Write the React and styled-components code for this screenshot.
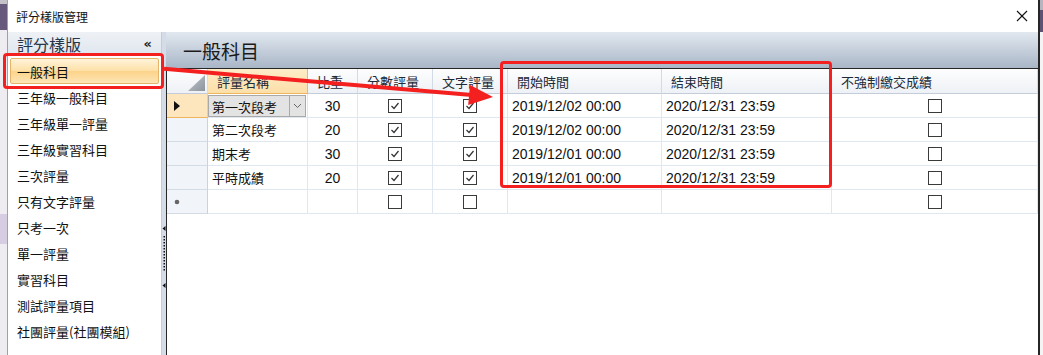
import React from 'react';
import styled, { createGlobalStyle } from 'styled-components';

const GlobalStyle = createGlobalStyle`
  html, body {
    margin: 0;
    padding: 0;
    background: #fff;
    overflow: hidden;
  }
  body {
    font-family: "Liberation Sans", "Noto Sans CJK TC", sans-serif;
    color: #111;
  }
`;

const COLS = '41px 100px 50px 75px 75px 154px 170px 1fr';

const templates = ['一般科目', '三年級一般科目', '三年級單一評量', '三年級實習科目', '三次評量', '只有文字評量', '只考一次', '單一評量', '實習科目', '測試評量項目', '社團評量(社團模組)'];

const rows = [
  { name: '第一次段考', weight: 30, start: '2019/12/02 00:00', end: '2020/12/31 23:59', editing: true },
  { name: '第二次段考', weight: 20, start: '2019/12/02 00:00', end: '2020/12/31 23:59' },
  { name: '期末考', weight: 30, start: '2019/12/01 00:00', end: '2020/12/31 23:59' },
  { name: '平時成績', weight: 20, start: '2019/12/01 00:00', end: '2020/12/31 23:59' },
];

const Screen = styled.div`
  position: relative;
  width: 1043px;
  height: 355px;
  display: flex;
  overflow: hidden;
`;

const DesktopLeft = styled.div`
  width: 7px;
  flex-shrink: 0;
  background: linear-gradient(
    to bottom,
    #c4c2c8 0, #c4c2c8 4px,
    #66597c 4px, #66597c 30px,
    #eeecf1 30px, #eeecf1 214px,
    #d6cde3 214px, #d6cde3 244px,
    #eeecf1 244px
  );
`;

const DesktopRight = styled.div`
  width: 3px;
  flex-shrink: 0;
  background: linear-gradient(to bottom, #b8b4bf 0, #b8b4bf 10px, #5e5274 10px, #5e5274 32px, #f4f4f4 32px);
`;

const Window = styled.div`
  flex: 1;
  display: flex;
  flex-direction: column;
  border-left: 1px solid #9aa2ab;
  border-right: 2px solid #262626;
  background: #fff;
`;

const TitleBar = styled.div`
  height: 32px;
  flex-shrink: 0;
  display: flex;
  align-items: center;
  justify-content: space-between;
  padding: 0 10px 0 8px;
  font-family: "Noto Sans CJK TC", sans-serif;
  font-size: 12px;
  background: #fff;
`;

const Body = styled.div`
  flex: 1;
  display: flex;
  min-height: 0;
`;

const Sidebar = styled.div`
  width: 153px;
  flex-shrink: 0;
  border-right: 1px solid #c3ccd7;
  display: flex;
  flex-direction: column;
  background: #fff;
`;

const SideHeader = styled.div`
  height: 24px;
  display: flex;
  align-items: center;
  justify-content: space-between;
  padding: 0 9px 0 9px;
  background: linear-gradient(to bottom, #eef2f6, #dfe6ee);
  font-family: "Noto Sans CJK TC", sans-serif;
  font-size: 16px;
  line-height: 24px;
  color: #26364a;
`;

const Collapse = styled.span`
  font-family: "DejaVu Sans", sans-serif;
  font-size: 13px;
  font-weight: bold;
  color: #222;
`;

const List = styled.div`
  padding: 2px 2px 0 2px;
  display: flex;
  flex-direction: column;
`;

const Item = styled.div`
  height: 26px;
  box-sizing: border-box;
  display: flex;
  align-items: center;
  padding-left: 6px;
  font-family: "Noto Sans CJK TC", sans-serif;
  font-size: 13px;
  color: #111;
  border: 1px solid ${({ selected }) => (selected ? '#e3b46a' : 'transparent')};
  border-radius: 2px;
  background: ${({ selected }) =>
    selected ? 'linear-gradient(to bottom, #fff3da 0%, #fde0a6 50%, #fcd38a 52%, #fde6b6 100%)' : 'transparent'};
`;

const Splitter = styled.div`
  width: 4px;
  flex-shrink: 0;
  background: #d4dce7;
  padding-top: 194px;
  box-sizing: border-box;
`;

const Main = styled.div`
  flex: 1;
  display: flex;
  flex-direction: column;
  min-width: 0;
`;

const MainHeader = styled.div`
  height: 36px;
  flex-shrink: 0;
  display: flex;
  align-items: center;
  padding-left: 17px;
  background: linear-gradient(to bottom, #e2e8f0, #a9b6c7);
  font-family: "Noto Sans CJK TC", sans-serif;
  font-size: 19px;
  color: #1a1a1a;
`;

const Grid = styled.div`
  flex: 1;
  border-top: 1px solid #262626;
  border-left: 1px solid #262626;
  background: #fff;
`;

const Row = styled.div`
  display: grid;
  grid-template-columns: ${COLS};
  height: ${({ head }) => (head ? '25px' : '24px')};
`;

const HeadCell = styled.div`
  box-sizing: border-box;
  display: flex;
  align-items: center;
  padding-left: 9px;
  font-family: "Noto Sans CJK TC", sans-serif;
  font-size: 13px;
  color: #1d2b3a;
  border-right: 1px solid ${({ active }) => (active ? '#e9b870' : '#d3dbe4')};
  border-bottom: 1px solid ${({ active }) => (active ? '#efb55c' : '#c3ccd8')};
  background: ${({ active }) =>
    active ? 'linear-gradient(to bottom, #feecc8, #fcdfa8)' : 'linear-gradient(to bottom, #fdfdfe, #eef1f5)'};
`;

const CornerCell = styled(HeadCell)`
  padding: 0 2px 2px 0;
  justify-content: flex-end;
  align-items: flex-end;
`;

const RowHead = styled.div`
  box-sizing: border-box;
  display: flex;
  align-items: center;
  padding-left: 7px;
  background: ${({ current }) => (current ? '#fde6bd' : '#f1f4f8')};
  border-right: 1px solid #c9d2dd;
  border-bottom: 1px solid ${({ current }) => (current ? '#efb55c' : '#d3dbe5')};
`;

const Cell = styled.div`
  box-sizing: border-box;
  display: flex;
  align-items: center;
  justify-content: ${({ align }) => align || 'flex-start'};
  padding-left: ${({ align }) => (align ? '0' : '4px')};
  font-family: "Liberation Sans", "Noto Sans CJK TC", sans-serif;
  font-size: ${({ cjk }) => (cjk ? '13px' : '14px')};
  color: #111;
  border-right: 1px solid #dfe7f0;
  border-bottom: 1px solid #dfe7f0;
  white-space: nowrap;
`;

const Combo = styled.div`
  flex: 1;
  align-self: stretch;
  margin: 1px 1px 0 0;
  display: flex;
  border: 1px solid #a9a9a9;
  background: #e3e3e3;
`;

const ComboText = styled.span`
  flex: 1;
  display: flex;
  align-items: center;
  padding-left: 3px;
  font-family: "Noto Sans CJK TC", sans-serif;
  font-size: 13px;
`;

const ComboButton = styled.span`
  width: 15px;
  border-left: 1px solid #a9a9a9;
  display: flex;
  align-items: center;
  justify-content: center;
`;

const Box = styled.span`
  width: 12px;
  height: 12px;
  border: 1px solid #3a3a3a;
  background: #fff;
  display: flex;
  align-items: center;
  justify-content: center;
`;

const Mark = styled.div`
  position: absolute;
  left: ${({ x }) => x}px;
  top: ${({ y }) => y}px;
  width: ${({ w }) => w}px;
  height: ${({ h }) => h}px;
  box-sizing: border-box;
  border: 3px solid #f42020;
  border-radius: 4px;
  pointer-events: none;
`;

const Arrow = styled.svg`
  position: absolute;
  left: 0;
  top: 0;
  pointer-events: none;
`;

const Check = ({ on }) => (
  <Box>
    {on && (
      <svg width="10" height="10" viewBox="0 0 10 10">
        <polyline points="1.5,5 4,7.5 8.5,2" fill="none" stroke="#333" strokeWidth="1.2" />
      </svg>
    )}
  </Box>
);

const Grip = () => (
  <svg width="4" height="64" viewBox="0 0 4 64">
    <polygon points="3.5,0 0.5,2.5 3.5,5" fill="#111" />
    {Array.from({ length: 12 }).map((_, i) => (
      <rect key={i} x="1.5" y={10 + i * 3} width="1.5" height="1.5" fill="#111" />
    ))}
    <polygon points="3.5,57 0.5,59.5 3.5,62" fill="#111" />
  </svg>
);

export default function App() {
  return (
    <Screen>
      <GlobalStyle />
      <DesktopLeft />
      <Window>
        <TitleBar>
          <span>評分樣版管理</span>
          <svg width="12" height="12" viewBox="0 0 12 12">
            <line x1="1" y1="1" x2="11" y2="11" stroke="#111" strokeWidth="1.1" />
            <line x1="11" y1="1" x2="1" y2="11" stroke="#111" strokeWidth="1.1" />
          </svg>
        </TitleBar>
        <Body>
          <Sidebar>
            <SideHeader>
              <span>評分樣版</span>
              <Collapse>«</Collapse>
            </SideHeader>
            <List>
              {templates.map((t, i) => (
                <Item key={t} selected={i === 0}>{t}</Item>
              ))}
            </List>
          </Sidebar>
          <Splitter>
            <Grip />
          </Splitter>
          <Main>
            <MainHeader>一般科目</MainHeader>
            <Grid>
              <Row head>
                <CornerCell>
                  <svg width="17" height="16" viewBox="0 0 17 16">
                    <defs>
                      <linearGradient id="tri" x1="0" y1="0" x2="1" y2="1">
                        <stop offset="0" stopColor="#c2c7cd" />
                        <stop offset="1" stopColor="#8d949c" />
                      </linearGradient>
                    </defs>
                    <polygon points="17,0 17,16 0,16" fill="url(#tri)" />
                  </svg>
                </CornerCell>
                <HeadCell active>評量名稱</HeadCell>
                <HeadCell>比重</HeadCell>
                <HeadCell>分數評量</HeadCell>
                <HeadCell>文字評量</HeadCell>
                <HeadCell>開始時間</HeadCell>
                <HeadCell>結束時間</HeadCell>
                <HeadCell>不強制繳交成績</HeadCell>
              </Row>
              {rows.map((r) => (
                <Row key={r.name}>
                  <RowHead current={r.editing}>
                    {r.editing && (
                      <svg width="6" height="10" viewBox="0 0 6 10">
                        <polygon points="0,0 6,5 0,10" fill="#111" />
                      </svg>
                    )}
                  </RowHead>
                  {r.editing ? (
                    <Cell style={{ paddingLeft: 0 }}>
                      <Combo>
                        <ComboText>{r.name}</ComboText>
                        <ComboButton>
                          <svg width="9" height="6" viewBox="0 0 9 6">
                            <polyline points="1,1 4.5,4.5 8,1" fill="none" stroke="#666" strokeWidth="1" />
                          </svg>
                        </ComboButton>
                      </Combo>
                    </Cell>
                  ) : (
                    <Cell cjk>{r.name}</Cell>
                  )}
                  <Cell align="center">{r.weight}</Cell>
                  <Cell align="center"><Check on /></Cell>
                  <Cell align="center"><Check on /></Cell>
                  <Cell>{r.start}</Cell>
                  <Cell>{r.end}</Cell>
                  <Cell align="center"><Check /></Cell>
                </Row>
              ))}
              <Row>
                <RowHead>
                  <svg width="6" height="6" viewBox="0 0 6 6">
                    <circle cx="3" cy="3" r="2.3" fill="#666" />
                  </svg>
                </RowHead>
                <Cell />
                <Cell />
                <Cell align="center"><Check /></Cell>
                <Cell align="center"><Check /></Cell>
                <Cell />
                <Cell />
                <Cell align="center"><Check /></Cell>
              </Row>
            </Grid>
          </Main>
        </Body>
      </Window>
      <DesktopRight />

      <Mark x={3} y={53} w={161} h={36} />
      <Mark x={500} y={61} w={332} h={127} />
      <Arrow width="1043" height="355" viewBox="0 0 1043 355">
        <line x1="164" y1="68.8" x2="472" y2="95.1" stroke="#f42020" strokeWidth="4" />
        <polygon points="493,97 468.2,104.9 470,84.9" fill="#f42020" />
      </Arrow>
    </Screen>
  );
}
